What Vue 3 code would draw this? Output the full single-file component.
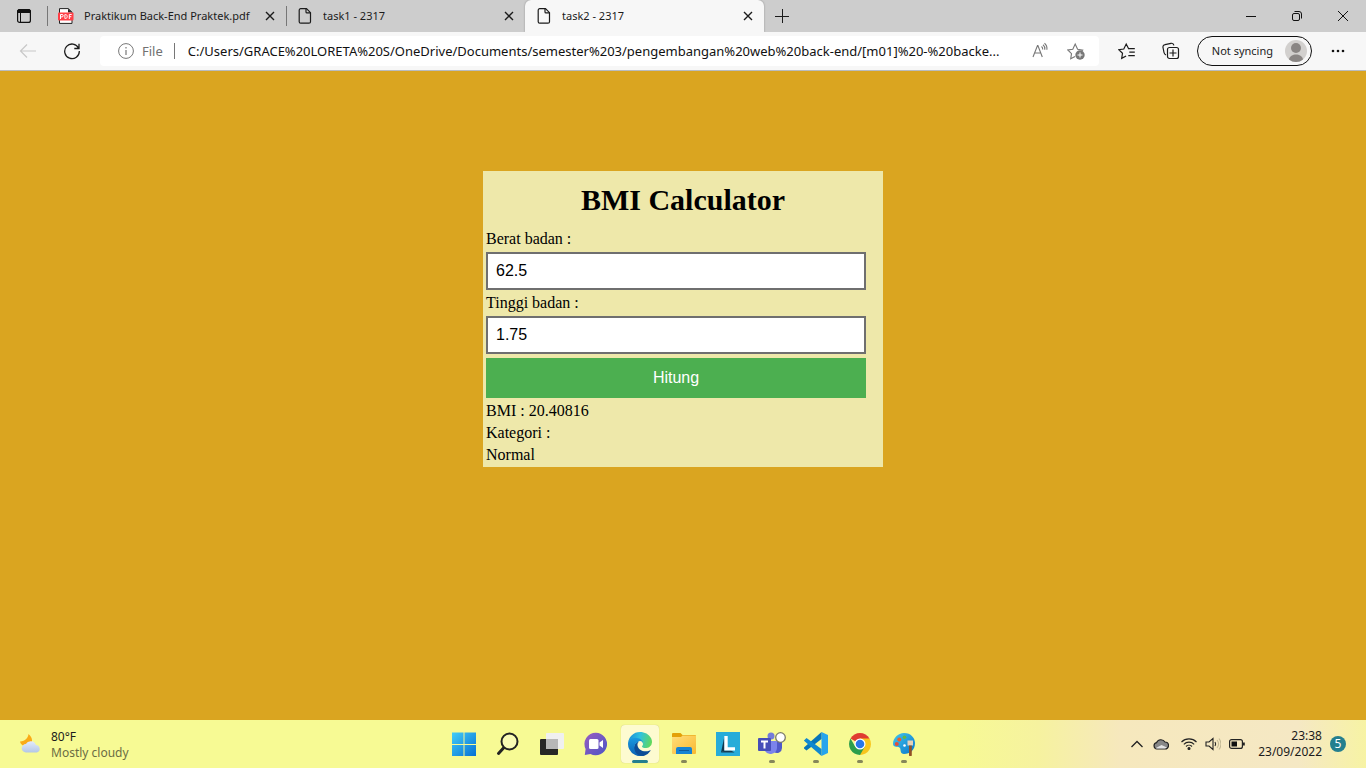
<script setup>
import { ref } from 'vue'

const weight = ref('62.5')
const height = ref('1.75')
const bmi = ref('20.40816')
const category = ref('Normal')

const tabs = [
  { title: 'Praktikum Back-End Praktek.pdf', pdf: true, active: false },
  { title: 'task1 - 2317', pdf: false, active: false },
  { title: 'task2 - 2317', pdf: false, active: true }
]

function calculate() {
  const value = Number(weight.value) / Number(height.value) ** 2
  if (!Number.isFinite(value)) return
  bmi.value = value.toFixed(5)
  category.value = value < 18.5 ? 'Kurus' : value < 25 ? 'Normal' : 'Gemuk'
}
</script>

<template>
  <div class="screen">
    <header class="browser">
      <div class="tabbar">
        <button class="tab-actions" aria-label="Tab actions menu">
          <svg width="16" height="16" viewBox="0 0 16 16" fill="none" stroke="#111">
            <rect x="1.6" y="1.6" width="12.8" height="12.8" rx="2" stroke-width="1.2" />
            <path d="M1.5 3.5a2 2 0 0 1 2-2h9a2 2 0 0 1 2 2v1h-13z" fill="#111" />
            <path d="M4.5 5v9.4" stroke-width="1" />
          </svg>
        </button>
        <div v-for="tab in tabs" :key="tab.title" class="tab" :class="{ active: tab.active }">
          <svg v-if="tab.pdf" width="16" height="16" viewBox="0 0 16 16">
            <path d="M1.5 .6h8.800L14 4.200v11.200H1.500z" fill="#fff" stroke="#222" stroke-width="1" />
            <path d="M10 .6v3.800h4z" fill="#222" />
            <rect x="0" y="4.500" width="15.500" height="8" rx="1" fill="#ff3e46" />
            <path d="M2.500 11V6.500H4a1.200 1.200 0 0 1 0 2.400H2.500M6.900 6.500v4h.6c2.300 0 2.300-4 0-4zM11.300 11V6.500h2.400M11.300 8.700h2" fill="none" stroke="#fff" stroke-width="1" />
          </svg>
          <svg v-else width="16" height="16" viewBox="0 0 16 16" fill="none" stroke="#1b1b1b" stroke-width="1.200">
            <path d="M3.700.7h5.800l4 4v9a1.500 1.500 0 0 1-1.500 1.500H3.700a1.500 1.500 0 0 1-1.500-1.500V2.200A1.500 1.500 0 0 1 3.700.7z" />
            <path d="M9 .9v3a1 1 0 0 0 1 1h3.300" />
          </svg>
          <span class="tab-title">{{ tab.title }}</span>
          <button class="close" :aria-label="'Close ' + tab.title">
            <svg width="10" height="10" viewBox="0 0 10 10" stroke="#1b1b1b" stroke-width="1.400"><path d="M1 1l8 8M9 1L1 9" /></svg>
          </button>
        </div>
        <button class="new-tab" aria-label="New tab">
          <svg width="14" height="14" viewBox="0 0 14 14" stroke="#1b1b1b"><path d="M0 7.500h14M7.500 0v14" /></svg>
        </button>
        <div class="window-buttons">
          <button aria-label="Minimize"><svg width="12" height="12" viewBox="0 0 12 12" stroke="#111"><path d="M1 6.500h10" /></svg></button>
          <button aria-label="Restore">
            <svg width="12" height="12" viewBox="0 0 12 12" fill="none" stroke="#111"><rect x="1.500" y="3.500" width="7" height="7" rx="1.500" /><path d="M3.500 1.500H8A2.500 2.500 0 0 1 10.500 4v4.500" /></svg>
          </button>
          <button aria-label="Close window"><svg width="12" height="12" viewBox="0 0 12 12" stroke="#111"><path d="M1 1l10 10M11 1L1 11" /></svg></button>
        </div>
      </div>

      <div class="toolbar">
        <button class="nav" aria-label="Back" disabled>
          <svg width="18" height="16" viewBox="0 0 18 16" fill="none" stroke="#c8c8c8" stroke-width="1.200"><path d="M17 8H1.500M8 1.500L1.500 8 8 14.500" /></svg>
        </button>
        <button class="nav reload" aria-label="Refresh">
          <svg width="18" height="18" viewBox="0 0 18 18" fill="none" stroke="#1b1b1b" stroke-width="1.300"><path d="M15.600 6.200A7.300 7.300 0 1 0 16.300 9M16 1.800v4.700h-4.700" /></svg>
        </button>
        <div class="address">
          <svg width="16" height="16" viewBox="0 0 16 16" fill="none" stroke="#777"><circle cx="8" cy="8" r="7.400" /><path d="M8 7v5M8 4v1.400" stroke-width="1.200" /></svg>
          <span class="scheme">File</span>
          <input class="url" aria-label="Address" readonly value="C:/Users/GRACE%20LORETA%20S/OneDrive/Documents/semester%203/pengembangan%20web%20back-end/[m01]%20-%20backe..." />
          <button aria-label="Read aloud">
            <svg width="18" height="18" viewBox="0 0 18 18" fill="none" stroke="#777" stroke-width="1.100"><path d="M2 15L6.500 3.500h.4L11.300 15M3.600 11h6.200M10.500 4.500c1 .8 1.300 1.800 1.200 3M12 2.800c1.500 1.200 2 3 1.800 4.900M13.500 1.200c2 1.600 2.700 4 2.400 6.500" /></svg>
          </button>
          <button aria-label="Add to favorites">
            <svg width="18" height="18" viewBox="0 0 18 18"><path d="M8 14.500l-4.300 2.300.8-5.100L.8 8l5-.8L8.200 2l2.400 5.200 5 .8-1 1" fill="none" stroke="#777" stroke-width="1.100" /><circle cx="13" cy="13" r="4.700" fill="#777" /><path d="M10.500 13h5M13 10.500v5" stroke="#fff" /></svg>
          </button>
        </div>
        <button class="tool" aria-label="Favorites">
          <svg width="18" height="18" viewBox="0 0 18 18" fill="none" stroke="#1b1b1b" stroke-width="1.200"><path d="M10.500 6.600L8.200 2 5.800 7l-5 .7 3.700 3.600-.8 5 4.400-2.300M10 6.600h6.800M11.300 10.200h5.500M10.300 13.700h6.500" /></svg>
        </button>
        <button class="tool" aria-label="Collections">
          <svg width="18" height="18" viewBox="0 0 18 18" fill="none" stroke="#1b1b1b" stroke-width="1.200"><rect x="5.500" y="5.500" width="11" height="11" rx="2" /><path d="M11 7.500v7M7.500 11h7M4 13A3.500 3.500 0 0 1 2 10.500L1 5.500a2.500 2.500 0 0 1 2-2.900l6-1.300a2.500 2.500 0 0 1 2.900 2" /></svg>
        </button>
        <button class="profile">
          <span>Not syncing</span>
          <svg width="22" height="22" viewBox="0 0 22 22"><circle cx="11" cy="11" r="11" fill="#d2d0ce" /><circle cx="11" cy="8" r="5" fill="#8a8684" /><path d="M4 19.400C5 12.800 17 12.800 18 19.400a11 11 0 0 1-14 0z" fill="#8a8684" /></svg>
        </button>
        <button class="more" aria-label="Settings and more">
          <svg width="14" height="4" viewBox="0 0 14 4" fill="#111"><circle cx="2" cy="2" r="1.300" /><circle cx="7" cy="2" r="1.300" /><circle cx="12" cy="2" r="1.300" /></svg>
        </button>
      </div>
    </header>

    <main class="page">
      <form class="card" @submit.prevent="calculate">
        <h1>BMI Calculator</h1>
        <label for="weight">Berat badan :</label>
        <input id="weight" v-model="weight" type="text" />
        <label for="height">Tinggi badan :</label>
        <input id="height" v-model="height" type="text" />
        <button type="submit">Hitung</button>
        <p>BMI : {{ bmi }}</p>
        <p>Kategori :</p>
        <p>{{ category }}</p>
      </form>
    </main>

    <footer class="taskbar">
      <button class="weather">
        <svg width="22" height="22" viewBox="0 0 22 22">
          <defs><linearGradient id="cloud" x1="0" y1="0" x2="0" y2="1"><stop stop-color="#e3ebfb" /><stop offset="1" stop-color="#b4c7e6" /></linearGradient></defs>
          <path d="M8.500 0c-.5 4-3 7-8.500 7.500C1 12 7 14 10 11.500S13 3.500 8.500 0z" fill="#f9ab16" />
          <path d="M6 18.500a4.200 4.200 0 0 1-.2-8.400 5.600 5.600 0 0 1 10.200.8 3.900 3.900 0 0 1 1 7.600z" fill="url(#cloud)" />
        </svg>
        <span class="weather-text"><span>80°F</span><span class="muted">Mostly cloudy</span></span>
      </button>

      <nav class="apps" aria-label="Taskbar">
        <button aria-label="Start">
          <svg width="24" height="24" viewBox="0 0 24 24">
            <defs><linearGradient id="win" x1="0" y1="0" x2="1" y2="1"><stop stop-color="#43cdf7" /><stop offset="1" stop-color="#0570d4" /></linearGradient></defs>
            <path d="M0 .5h11.500V12H0zM12.500.5H24V12H12.500zM0 13h11.500v11H0zM12.500 13H24v11H12.500z" fill="url(#win)" />
          </svg>
        </button>
        <button aria-label="Search">
          <svg width="24" height="24" viewBox="0 0 24 24" fill="none" stroke="#222"><circle cx="13.500" cy="9.500" r="8" stroke-width="2" fill="#fff" fill-opacity=".3" /><path d="M7.500 16L2.500 21.500" stroke-width="3" stroke-linecap="round" /></svg>
        </button>
        <button aria-label="Task view">
          <svg width="24" height="24" viewBox="0 0 24 24"><rect x="0" y="7" width="18" height="16" rx="1" fill="#272727" /><rect x="6" y="1" width="18" height="16" rx="1" fill="#f0f0f0" /><path d="M6 7h12v10H6z" fill="#b7b7b7" /></svg>
        </button>
        <button aria-label="Chat">
          <svg width="24" height="24" viewBox="0 0 24 24">
            <defs><linearGradient id="chat" x1="0" y1="0" x2="1" y2="1"><stop stop-color="#9a5dc0" /><stop offset="1" stop-color="#4c55c5" /></linearGradient></defs>
            <path d="M12 .7A11.300 11.300 0 1 1 6.500 22L.8 23l.8-6A11.300 11.300 0 0 1 12 .7z" fill="url(#chat)" />
            <rect x="5" y="7" width="9.500" height="10" rx="1.500" fill="#fff" /><path d="M15.500 10.500L19 8v8l-3.500-2.500z" fill="#fff" />
          </svg>
        </button>
        <button class="current" aria-label="Microsoft Edge">
          <svg width="24" height="24" viewBox="0 0 256 256">
            <defs>
              <linearGradient id="edgeTop" x1="0" y1=".4" x2="1" y2=".6"><stop stop-color="#1b8fd5" /><stop offset=".45" stop-color="#2fc2df" /><stop offset="1" stop-color="#62d957" /></linearGradient>
              <linearGradient id="edgeLow" x1="0" y1="0" x2="0" y2="1"><stop stop-color="#1b9de2" /><stop offset="1" stop-color="#0b62b4" /></linearGradient>
            </defs>
            <path d="M235.700 195.500a94 94 0 0 1-10.600 4.700 102 102 0 0 1-35.900 6.400c-47.300 0-88.500-32.500-88.500-74.300A31.500 31.500 0 0 1 117 105c-42.800 1.800-53.800 46.400-53.800 72.500 0 73.900 68 81.400 82.800 81.400 7.900 0 19.800-2.300 27-4.600l1.300-.4a128 128 0 0 0 66.600-52.800 4 4 0 0 0-5.200-5.600z" fill="#0d4d96" />
            <path d="M105.700 241.400A79 79 0 0 1 83 220a80.700 80.700 0 0 1 29.500-120c3.100-1.500 8.500-4.100 15.500-4a32.300 32.300 0 0 1 25.700 13 31.900 31.900 0 0 1 6.400 18.600c0-.2 24.400-79.600-80-79.600-43.900 0-80 41.700-80 78.200a130 130 0 0 0 12 56 128 128 0 0 0 156.400 67.200 75.500 75.500 0 0 1-62.800-8z" fill="url(#edgeLow)" />
            <path d="M152.300 148.900c-.8 1-3.300 2.500-3.300 5.600 0 2.600 1.700 5.100 4.700 7.200 14.400 10 41.500 8.700 41.600 8.700a59.600 59.600 0 0 0 30.300-8.300A61.400 61.400 0 0 0 256 109c.3-22.400-8-37.300-11.300-43.900C223.500 23.800 177.700 0 128 0A128 128 0 0 0 0 126.200c.5-36.500 36.800-66 80-66 3.500 0 23.500.3 42 10 16.300 8.600 24.900 19 30.900 29.200 6.100 10.700 7.200 24.200 7.200 29.500s-2.700 13.400-7.800 20z" fill="url(#edgeTop)" />
          </svg>
        </button>
        <button class="running" aria-label="File Explorer">
          <svg width="24" height="24" viewBox="0 0 24 24">
            <defs><linearGradient id="folder" x1="0" y1="0" x2="1" y2="1"><stop stop-color="#ffdd7a" /><stop offset="1" stop-color="#f9b930" /></linearGradient></defs>
            <path d="M0 2a1 1 0 0 1 1-1h7.500l2 2H23a1 1 0 0 1 1 1v8H0z" fill="#e3a008" /><path d="M0 5h9l1.500-1.500H24V21a1 1 0 0 1-1 1H1a1 1 0 0 1-1-1z" fill="url(#folder)" />
            <path d="M4 22v-5a2 2 0 0 1 2-2h12a2 2 0 0 1 2 2v5z" fill="#1584d3" /><path d="M7 18h10v1H7z" fill="#0d5b9e" />
          </svg>
        </button>
        <button aria-label="Learning app">
          <svg width="24" height="24" viewBox="0 0 24 24"><path d="M0 0h24v24H0z" fill="#27acd9" /><path d="M8.500 4v14.500L5 20.500z" fill="#11384f" /><path d="M8.500 18.500H15L18.500 20.500H5z" fill="#163d54" /><path d="M8.300 4h3.400v11.300H19v3.200H8.300z" fill="#fff" /></svg>
        </button>
        <button class="running" aria-label="Microsoft Teams">
          <svg width="28" height="24" viewBox="0 0 28 24">
            <circle cx="13" cy="4" r="3.500" fill="#747bd9" /><path d="M18 9h6v7a5 5 0 0 1-8 4z" fill="#5059c9" /><path d="M7 9h12v7a6.500 6.500 0 0 1-12 3z" fill="#7b83eb" />
            <rect x="0" y="6" width="13" height="13" rx="1" fill="#464eb8" /><path d="M3 9.500h7M6.500 9.500v7" stroke="#fff" stroke-width="2" />
            <circle cx="22.500" cy="5.500" r="4.800" fill="#fff" stroke="#7a7a6a" stroke-width="1.300" />
          </svg>
        </button>
        <button class="running" aria-label="Visual Studio Code">
          <svg width="24" height="24" viewBox="0 0 24 24"><path d="M17.500 0L24 3v18l-6.500 3z" fill="#26a5ed" /><path d="M17.500 0v7L2.500 18.600 0 16.500v-1z" fill="#0875b9" /><path d="M0 8.500l2.500-2.400L17.500 17v7L0 8.800z" fill="#1188cf" /></svg>
        </button>
        <button class="running" aria-label="Google Chrome">
          <svg width="24" height="24" viewBox="0 0 24 24"><path d="M12 12L2.500 6.500a11 11 0 0 1 19 0z" fill="#df3c30" /><path d="M12 12V6.500h9.500A11 11 0 0 1 12 23z" fill="#f8c51c" /><path d="M12 12l4.800 2.800L12 23A11 11 0 0 1 2.500 6.500l4.800 8.200z" fill="#2c9e4b" /><circle cx="12" cy="12" r="5.500" fill="#fff" /><circle cx="12" cy="12" r="4.300" fill="#2876e8" /></svg>
        </button>
        <button class="running" aria-label="Paint">
          <svg width="24" height="24" viewBox="0 0 24 24">
            <defs><linearGradient id="paint" x1="0" y1="0" x2="1" y2="1"><stop stop-color="#43c5ee" /><stop offset="1" stop-color="#0876ca" /></linearGradient></defs>
            <path d="M12 1c7 0 11 5 11 10 0 7-5 11-11 11-4 0-3-4-4-6s-7 0-7-4C1 6 6 1 12 1z" fill="url(#paint)" />
            <circle cx="4.800" cy="12" r="2" fill="#e14e3b" /><circle cx="7.300" cy="7.500" r="2" fill="#ed5f2b" /><circle cx="12.500" cy="5.300" r="1.800" fill="#63b944" /><circle cx="12.500" cy="13.500" r="1.300" fill="#fff" />
            <path d="M15.500 8.500h5.500v5h-5.500z" fill="#e7d0b8" /><path d="M17 13.500h2.800V23a1 1 0 0 1-2.800 0z" fill="#925126" />
          </svg>
        </button>
      </nav>

      <div class="tray">
        <button class="chevron" aria-label="Show hidden icons"><svg width="12" height="8" viewBox="0 0 12 8" fill="none" stroke="#222" stroke-width="1.300"><path d="M.5 7L6 1.500 11.500 7" /></svg></button>
        <button class="cloud" aria-label="OneDrive"><svg width="16" height="12" viewBox="0 0 16 12"><path d="M4 11a3.200 3.200 0 0 1-.5-6.300A4.800 4.800 0 0 1 12 4a3.500 3.500 0 0 1 0 7z" fill="#888" stroke="#222" stroke-width="1.200" /><path d="M2.500 10.200L8.500 7l5.500 2.500-2 .9H4z" fill="#e4e4e4" /></svg></button>
        <button class="system" aria-label="Network, volume and battery">
          <svg width="16" height="14" viewBox="0 0 16 14" fill="none" stroke="#222" stroke-width="1.100"><path d="M.5 5a10.500 10.500 0 0 1 15 0M2.800 7.300a7.300 7.300 0 0 1 10.400 0M5 9.500a4.300 4.300 0 0 1 6 0" /><circle cx="8" cy="11.500" r="1" fill="#222" /></svg>
          <svg width="16" height="14" viewBox="0 0 16 14" fill="none" stroke="#222" stroke-width="1.100"><path d="M1 5h3l4-3.500v11L4 9H1zM10 5c.8 1.200.8 2.800 0 4" /><path d="M12 3c2 2.500 2 5.500 0 8M14 1.500c2.500 3.500 2.500 7.500 0 11" stroke="#c2b995" /></svg>
          <svg width="16" height="12" viewBox="0 0 16 12"><rect x=".6" y="1.600" width="12.800" height="8.800" rx="2" fill="none" stroke="#222" stroke-width="1.200" /><rect x="2.500" y="3.500" width="5.500" height="5" fill="#111" /><path d="M14 4.500h1.800v3H14z" fill="#222" /></svg>
        </button>
        <div class="clock"><span>23:38</span><span>23/09/2022</span></div>
        <button class="badge" aria-label="5 notifications">5</button>
      </div>
    </footer>
  </div>
</template>

<style>
body { margin: 0; }
</style>

<style scoped>
.screen {
  min-height: 100vh;
  display: flex;
  flex-direction: column;
  background: #daa520;
  font-family: "Noto Sans", "Open Sans", sans-serif;
  font-size: 11px;
  line-height: 16px;
  color: #1b1b1b;
}
svg { display: block; flex: none; }
button {
  border: 0;
  margin: 0;
  padding: 0;
  background: none;
  color: inherit;
  font: inherit;
  display: flex;
  align-items: center;
  justify-content: center;
}
.tabbar {
  height: 32px;
  display: flex;
  background: #cdcdcd;
}
.tab-actions { width: 47px; flex: none; }
.tab {
  flex: 0 1 239px;
  min-width: 0;
  box-sizing: border-box;
  display: flex;
  align-items: center;
  gap: 10px;
  padding: 0 11px;
  background: linear-gradient(#777, #777) left center / 1px 20px no-repeat;
}
.tab.active {
  background: #f7f7f7;
  border-radius: 6px 6px 0 0;
  box-shadow: 0 0 2px #888;
  clip-path: inset(0 -3px 0 -3px);
}
.tab-title {
  flex: 1;
  min-width: 0;
  white-space: nowrap;
  overflow: hidden;
}
.new-tab { width: 36px; flex: none; }
.window-buttons { display: flex; margin-left: auto; }
.window-buttons button { width: 46px; }
.toolbar {
  height: 38px;
  display: flex;
  align-items: center;
  padding: 0 21px 0 18px;
  background: #f7f7f7;
  border-bottom: 1px solid #b9bcc0;
}
.nav { width: 20px; }
.reload { margin: 0 18px 0 24px; }
.address {
  flex: 1;
  min-width: 0;
  height: 30px;
  display: flex;
  align-items: center;
  padding: 0 14px 0 18px;
  border-radius: 4px;
  background: #fff;
}
.scheme {
  margin: 0 13px 0 8px;
  padding-right: 11px;
  color: #717171;
  font-size: 13px;
  border-right: 1px solid #777;
}
.url {
  flex: 1;
  min-width: 0;
  height: 24px;
  padding: 0;
  margin-right: 14px;
  border: 0;
  outline: 0;
  font: 13px "Noto Sans", "Open Sans", sans-serif;
  color: #111;
  background: none;
  text-overflow: ellipsis;
}
.address button + button { margin-left: 18px; }
.tool { margin-left: 19px; width: 18px; }
.tool + .tool { margin-left: 26px; }
.profile {
  height: 30px;
  box-sizing: border-box;
  margin: 0 19px 0 17px;
  padding: 0 4px 0 14px;
  gap: 12px;
  border: 1px solid #111;
  border-radius: 15px;
  white-space: nowrap;
}

.page {
  flex: 1;
  display: flex;
  flex-direction: column;
  align-items: center;
  padding: 100px 16px 16px;
}
.card {
  width: 100%;
  max-width: 400px;
  box-sizing: border-box;
  padding: 12px 17px 1px 3px;
  background: #eee8aa;
  color: #000;
  font: 16px/22px "Liberation Serif", "Times New Roman", serif;
}
.card h1 {
  margin: 0 -14px 11px 0;
  text-align: center;
  font-size: 30px;
  line-height: 34px;
}
.card label,
.card p {
  display: block;
  margin: 0;
}
.card input {
  display: block;
  width: 100%;
  height: 38px;
  box-sizing: border-box;
  margin: 2px 0;
  padding: 0 8px;
  border: 2px solid #6f6f6f;
  border-radius: 0;
  background: #fff;
  color: #000;
  font: 16px "Liberation Sans", Arial, sans-serif;
}
.card button {
  width: 100%;
  height: 40px;
  margin: 4px 0 2px;
  background: #4caf50;
  color: #fff;
  font: 16px "Liberation Sans", Arial, sans-serif;
}

.taskbar {
  height: 48px;
  display: grid;
  grid-template-columns: 1fr auto 1fr;
  align-items: center;
  font-size: 12px;
  background: linear-gradient(90deg, #f7fa94 0%, #f7fa94 70%, #f6f29f 76%, #f6e8bd 82%, #f5e8c4 95%, #f7f3a4 100%);
}
.weather {
  justify-self: start;
  gap: 9px;
  padding: 2px 0 0 20px;
  text-align: left;
}
.weather-text { display: flex; flex-direction: column; }
.muted { color: #6b6c43; }
.apps { display: flex; gap: 6px; padding-left: 1px; }
.apps button {
  position: relative;
  width: 38px;
  height: 38px;
}
.apps .current {
  border-radius: 4px;
  background: #fdfbd0;
  box-shadow: 0 0 1px #bcb779;
}
.apps .running::after,
.apps .current::after {
  content: "";
  position: absolute;
  left: 16px;
  bottom: 0;
  width: 6px;
  height: 3px;
  border-radius: 2px;
  background: #86875a;
}
.apps .current::after {
  left: 11px;
  width: 16px;
  background: #247f8e;
}
.tray {
  justify-self: end;
  display: flex;
  align-items: center;
  padding-right: 20px;
}
.cloud { margin: 0 12px 0 10px; }
.system { gap: 8px; }
.clock {
  display: flex;
  flex-direction: column;
  text-align: right;
  margin: 0 8px 0 13px;
}
.badge {
  width: 16px;
  height: 16px;
  border-radius: 50%;
  background: #247f8e;
  color: #fff;
}
</style>
